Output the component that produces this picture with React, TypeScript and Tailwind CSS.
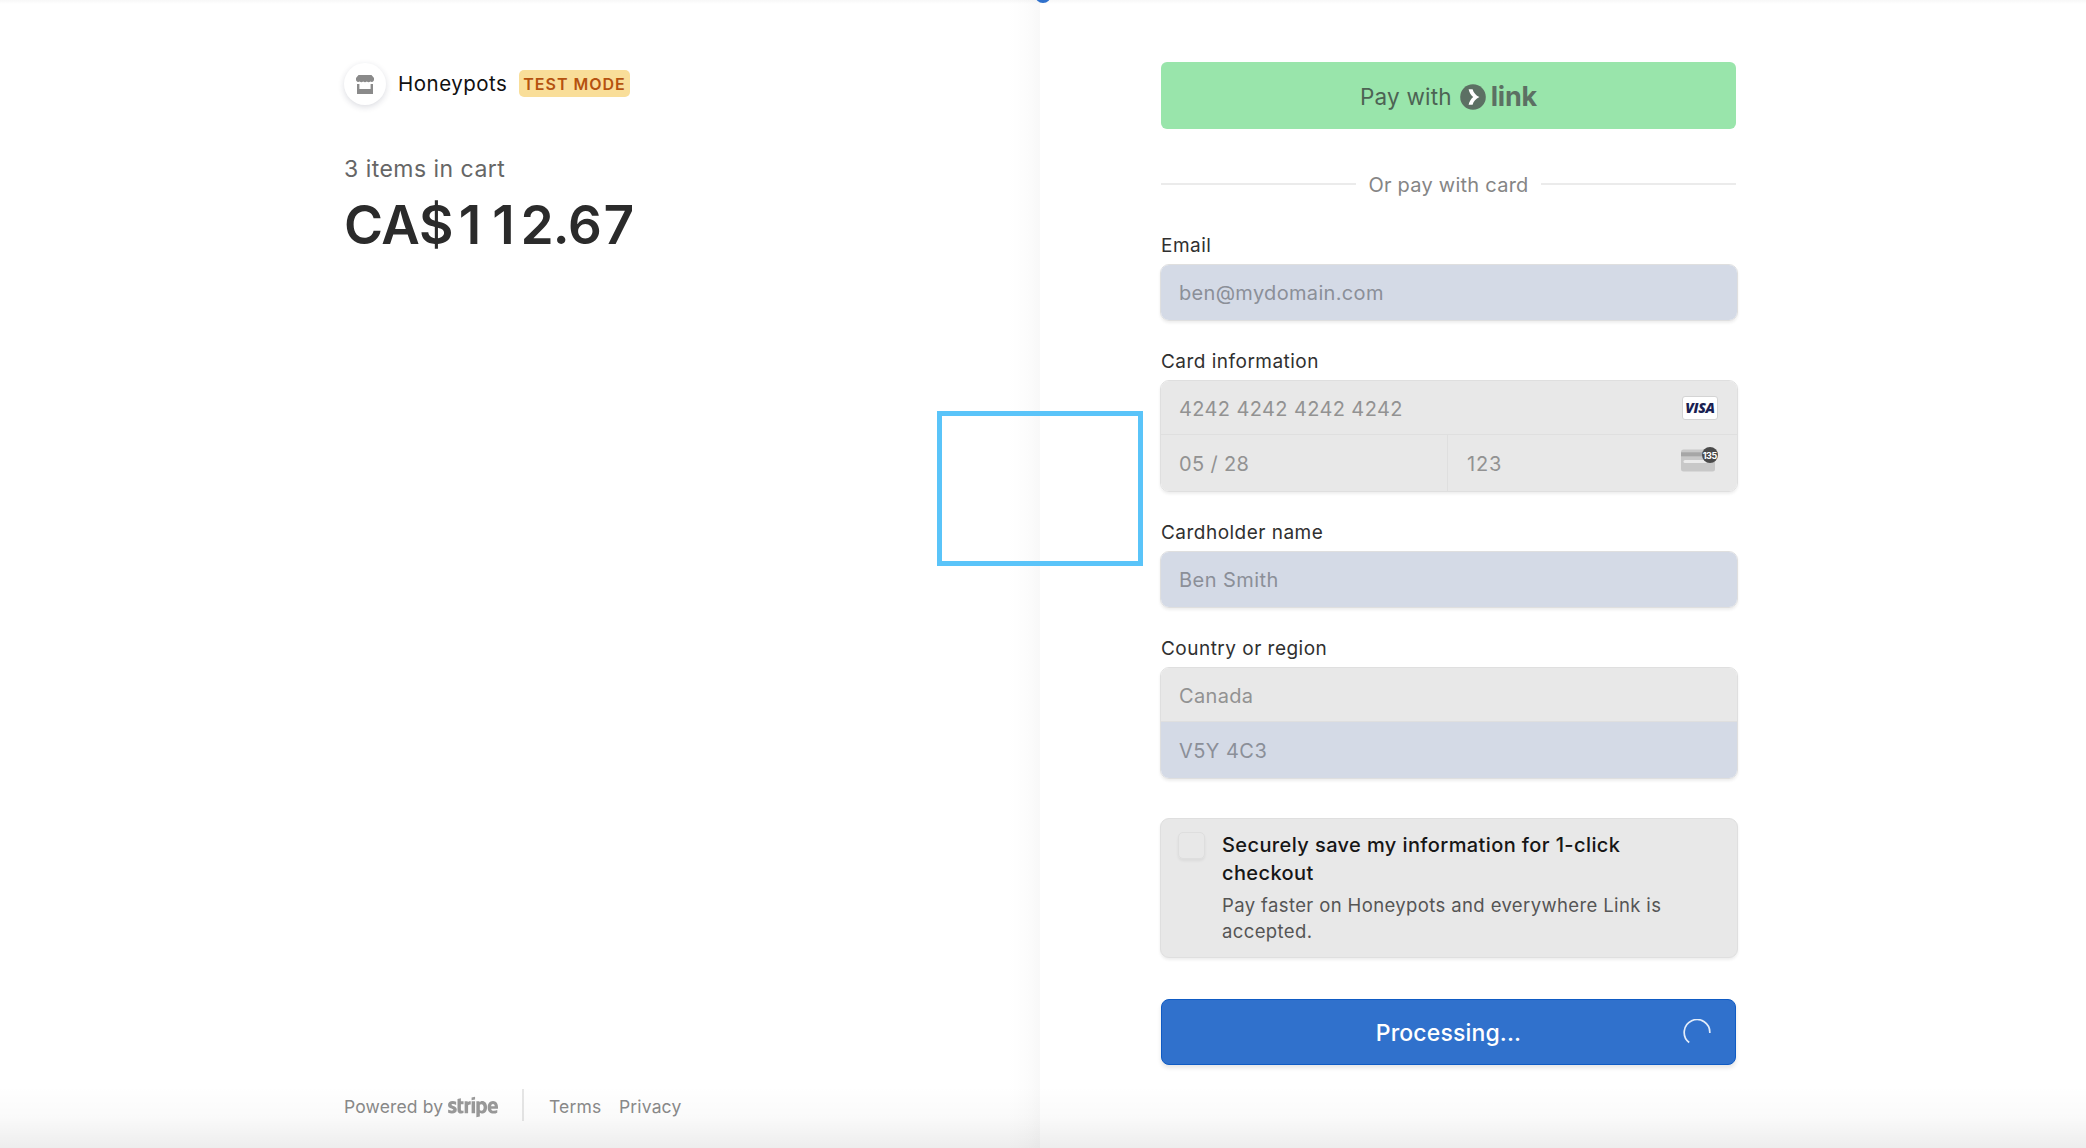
import type { ReactNode } from 'react';
import { FaStripe } from 'react-icons/fa';

function StoreIcon() {
  return (
    <svg width="18" height="19" viewBox="0 0 18 19" fill="#8a8a8a">
      <path d="M2.500 0h13L18 3v2a2.300 2.300 0 0 1-3.600 1.500 2.700 2.700 0 0 1-3.600 0 2.700 2.700 0 0 1-3.600 0 2.700 2.700 0 0 1-3.600 0A2.300 2.300 0 0 1 0 5V3z" />
      <path d="M1 9h2.400v5h11.200V9H17v10H1z" />
    </svg>
  );
}

function LinkMark() {
  return (
    <svg width="26" height="26" viewBox="0 0 26 26">
      <circle cx="13" cy="13" r="12.800" fill="#5c7063" />
      <path d="M8.600 5.200h4c.9 3.400 3.300 6.200 6.800 7.800-3.500 1.600-5.900 4.400-6.800 7.800h-4c.7-3.200 2.300-5.900 4.600-7.800-2.300-1.900-3.900-4.600-4.600-7.800z" fill="#fff" />
    </svg>
  );
}

function VisaBadge() {
  return (
    <span className="flex h-6 w-9 items-center justify-center rounded-[3px] border border-[#d4d4d4] bg-white font-['Open_Sans'] text-[14px] leading-none font-extrabold tracking-[-0.3px] text-[#1a1f52] italic">
      VISA
    </span>
  );
}

function CvcIcon() {
  return (
    <svg width="37" height="26" viewBox="0 0 37 26">
      <rect x="0" y="2.500" width="34" height="22" rx="2.500" fill="#c8c8c8" />
      <rect x="0" y="5.300" width="34" height="4" fill="#a6a6a6" />
      <rect x="2.500" y="13" width="24" height="3" rx="1.500" fill="#ebebeb" />
      <circle cx="29" cy="8" r="8" fill="#4a4a4a" />
      <text x="28.700" y="11.500" textAnchor="middle" fontFamily="Inter, sans-serif" fontSize="9" fontWeight="700" letterSpacing="-0.500" fill="#fff">135</text>
    </svg>
  );
}

function Label({ children }: { children: ReactNode }) {
  return <div className="mt-[29px] mb-1.5 ml-px h-6 text-[19px] leading-6 tracking-[0.48px] text-[#303030]">{children}</div>;
}

const group = 'flex flex-col overflow-hidden rounded-[9px] border border-[#dfdfdf] text-[20px] tracking-[0.33px] text-[#929292] shadow-[0_2px_3px_rgba(0,0,0,0.07)]';

export default function App() {
  return (
    <div className="relative flex h-[1148px] w-full overflow-hidden bg-white font-['Inter',sans-serif]">
      <section className="flex w-[1040px] flex-none flex-col justify-between bg-[linear-gradient(to_left,#f8f8f8_0,#fcfcfc_12px,#fefefe_24px,#fff_32px)] pl-[344px]">
        <div>
          <div className="mt-[63px] flex h-[42px] items-center">
            <span className="flex size-[42px] items-center justify-center rounded-full bg-white shadow-[0_2px_6px_rgba(30,40,70,0.16)]">
              <StoreIcon />
            </span>
            <span className="ml-3 w-[108px] text-[20.500px] leading-6 tracking-[0.5px] whitespace-nowrap text-[#101010]">Honeypots</span>
            <span className="mb-px ml-[13px] flex h-[27px] w-[111px] items-center justify-center rounded-[5px] bg-[#f9de99] text-[16px] leading-none font-semibold tracking-[1px] whitespace-nowrap text-[#b5520f]">TEST MODE</span>
          </div>
          <div className="mt-[49px] text-[23px] leading-[30px] tracking-[0.48px] text-[#666]">3 items in cart</div>
          <div className="mt-[9px] flex text-[53px] leading-[64px] font-semibold tracking-[-0.4px] text-[#2b2b2b]">
            <span>CA$</span>
            <span className="w-[33.500px] text-center">1</span>
            <span className="w-[33.500px] text-center">1</span>
            <span className="tabular-nums">2.67</span>
          </div>
        </div>
        <div className="mb-[25px] flex h-8 items-center text-[17.500px] tracking-[0.15px] text-[#8a8a8a]">
          <span className="w-[104px] whitespace-nowrap">Powered by</span>
          <FaStripe className="h-10 w-[50px] text-[#9a9a9a]" aria-label="stripe" />
          <span className="relative bottom-0.5 ml-6 h-8 w-0.5 bg-[#e6e6e6]" />
          <span className="ml-[25px] w-[70px]">Terms</span>
          <span>Privacy</span>
        </div>
      </section>

      <main className="ml-[120px] flex w-[578px] flex-none flex-col pt-[62px]">
        <div className="mr-0.5 ml-px flex h-[67px] items-center justify-center rounded-[6px] bg-[#99e5ab] text-[#4d6354]">
          <span className="pt-0.5 text-[22.500px] tracking-[0.2px]">Pay with</span>
          <span className="mr-[5px] ml-2 pt-0.5"><LinkMark /></span>
          <span className="pt-[3px] text-[27px] font-bold tracking-[-0.2px] text-[#5c7063]">link</span>
        </div>
        <div className="mr-0.5 ml-px mt-[42px] flex h-[26px] items-center gap-3 text-[20px] tracking-[0.25px] text-[#858585]">
          <span className="h-0.5 flex-1 bg-[#ebebeb]" />
          <span className="pt-px">Or pay with card</span>
          <span className="h-0.5 flex-1 bg-[#ebebeb]" />
        </div>

        <div className="h-2" />
        <Label>Email</Label>
        <div className={group}>
          <div className="flex h-[55px] items-center bg-[#d4dae6] px-[18px] text-[#8b8f98]">ben@mydomain.com</div>
        </div>

        <Label>Card information</Label>
        <div className={group}>
          <div className="flex h-[54px] items-center justify-between border-b border-[#dfdfdf] bg-[#e8e8e8] pr-[19px] pl-[18px]">
            <span className="pt-0.5 tracking-[0.38px]">4242 4242 4242 4242</span>
            <VisaBadge />
          </div>
          <div className="flex h-14 bg-[#e8e8e8]">
            <div className="flex w-[287px] items-center border-r border-[#dfdfdf] px-[18px] pt-0.5">05 / 28</div>
            <div className="flex flex-1 items-center justify-between pr-[19px] pl-[19px]">
              <span className="pt-0.5 tracking-[0.8px]">123</span>
              <span className="mb-1.5"><CvcIcon /></span>
            </div>
          </div>
        </div>

        <Label>Cardholder name</Label>
        <div className={group}>
          <div className="flex h-[55px] items-center bg-[#d4dae6] px-[18px] tracking-[0.45px] text-[#8b8f98]">Ben Smith</div>
        </div>

        <Label>Country or region</Label>
        <div className={group}>
          <div className="flex h-[54px] items-center border-b border-[#dfdfdf] bg-[#e8e8e8] px-[18px] pt-0.5">Canada</div>
          <div className="flex h-14 items-center bg-[#d4dae6] px-[18px] pt-0.5 tracking-[0.45px] text-[#8b8f98]">V5Y 4C3</div>
        </div>

        <div className="mt-[39px] flex h-[140px] rounded-[9px] border border-[#dfdfdf] bg-[#e8e8e8] pt-[13px] pl-[17px] shadow-[0_2px_3px_rgba(0,0,0,0.07)]">
          <span className="size-[27px] flex-none rounded-[5px] border border-[#dedede] shadow-[0_2px_3px_rgba(0,0,0,0.06)]" />
          <div className="ml-[17px] -mt-px">
            <p className="text-[20px] leading-7 font-medium tracking-[0.4px] text-[#161616]">Securely save my information for 1-click<br />checkout</p>
            <p className="mt-[5px] text-[18.500px] leading-[26px] tracking-[0.38px] text-[#555]">Pay faster on Honeypots and everywhere Link is<br />accepted.</p>
          </div>
        </div>

        <button className="relative mr-0.5 ml-px mt-[41px] flex h-[66px] flex-none items-center justify-center rounded-[8px] border border-[#0f5bc4] bg-[#3071cc] pt-0.5 text-[23px] font-medium tracking-[0.15px] text-white shadow-[0_3px_4px_rgba(0,0,0,0.1)]">
          Processing...
          <svg className="absolute right-[24px]" width="28" height="28" viewBox="0 0 28 28" fill="none">
            <path d="M6.200 23.500A12.800 12.800 0 1 1 26.800 14" stroke="#e3edfa" strokeWidth="1.700" />
          </svg>
        </button>
      </main>

      <div className="pointer-events-none absolute inset-x-0 bottom-0 h-[62px] bg-[linear-gradient(to_bottom,transparent,rgba(0,0,0,0.02)_50%,rgba(0,0,0,0.07))]" />
      <div className="absolute inset-x-0 top-0 h-1 bg-gradient-to-b from-black/3 to-transparent" />
      <div className="absolute -top-[13px] left-[1035px] size-4 rounded-full bg-[#3071cc]" />
      <div className="absolute top-[411px] left-[937px] h-[155px] w-[206px] border-5 border-[#5ac4f9]" />
    </div>
  );
}
